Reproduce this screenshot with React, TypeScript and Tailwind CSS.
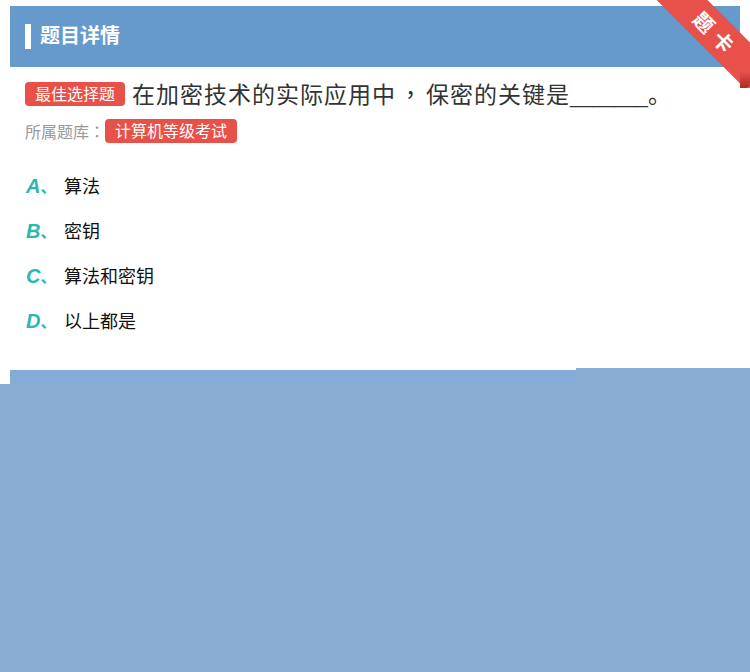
import React from "react";

const font = { fontFamily: '"Noto Sans CJK SC", "Microsoft YaHei", sans-serif' };
const tc = { fontFamily: '"Noto Sans CJK TC", "Noto Sans CJK SC", sans-serif' };

function Option({ letter, text }: { letter: string; text: string }) {
  return (
    <div className="flex items-center h-[45px]">
      <span className="w-[38px] text-[20px] font-bold italic text-[#2cb8b2] leading-none" style={{ fontFamily: '"Liberation Sans", "Noto Sans CJK SC", sans-serif' }}>
        {letter}<span className="not-italic text-[16px]">、</span>
      </span>
      <span className="text-[18px] text-[#111]">{text}</span>
    </div>
  );
}

export default function App() {
  return (
    <div className="relative w-[750px] h-[672px] bg-white overflow-hidden" style={font}>
      <div className="pt-[6px] pl-[10px] pr-[10px]">
        <div className="h-[61px] bg-[#6699cc] flex items-center pl-[15px]">
          <div className="w-[6px] h-[25px] bg-white mr-[9px]" />
          <span className="text-white text-[20px] font-bold mb-[4px]">题目详情</span>
        </div>
        <div className="pl-[15px] pt-[14px]">
          <div className="flex items-center h-[26px]">
            <span className="bg-[#e8504a] text-white text-[16px] rounded-[4px] px-[10px] h-[24px] leading-[22px]">最佳选择题</span>
            <span className="ml-[7px] text-[23px] text-[#333] leading-none tracking-[1px]">
              在加密技术的实际应用中<span className="mx-[3px]" style={tc}>，</span>保密的关键是<span className="text-[20px] tracking-normal" style={{ fontFamily: '"Liberation Sans", sans-serif' }}>_______</span>。
            </span>
          </div>
          <div className="flex items-center mt-[12px] h-[24px]">
            <span className="text-[16px] text-[#999]">所属题库<span style={tc}>：</span></span>
            <span className="bg-[#e8504a] text-white text-[16px] rounded-[4px] px-[10px] h-[24px] leading-[22px]">计算机等级考试</span>
          </div>
          <div className="mt-[20px] pl-[1px]">
            <Option letter="A" text="算法" />
            <Option letter="B" text="密钥" />
            <Option letter="C" text="算法和密钥" />
            <Option letter="D" text="以上都是" />
          </div>
        </div>
      </div>
      {/* ribbon */}
      <div className="absolute top-0 right-0 w-[100px] h-[88px] overflow-hidden">
        <div className="absolute left-[-14px] top-[17px] w-[162px] h-[36px] bg-[#e8504a] rotate-45 flex items-center justify-center rounded-[6px]">
          <span className="text-white text-[20px] font-bold tracking-[7px] mr-[2px]">题卡</span>
        </div>
        <div className="absolute right-0 bottom-0 w-[10px] h-[16px] bg-gradient-to-b from-[#e8504a] to-[#a92a25] rounded-br-[5px]" />
      </div>
      {/* lower overlay blocks */}
      <div className="absolute left-[10px] top-[370px] w-[566px] h-[14px] bg-[#84acd6]" />
      <div className="absolute left-[576px] top-[368px] w-[174px] h-[16px] bg-[#8aadd3]" />
      <div className="absolute left-0 top-[384px] w-[750px] h-[288px] bg-[#8aadd3]" />
    </div>
  );
}
